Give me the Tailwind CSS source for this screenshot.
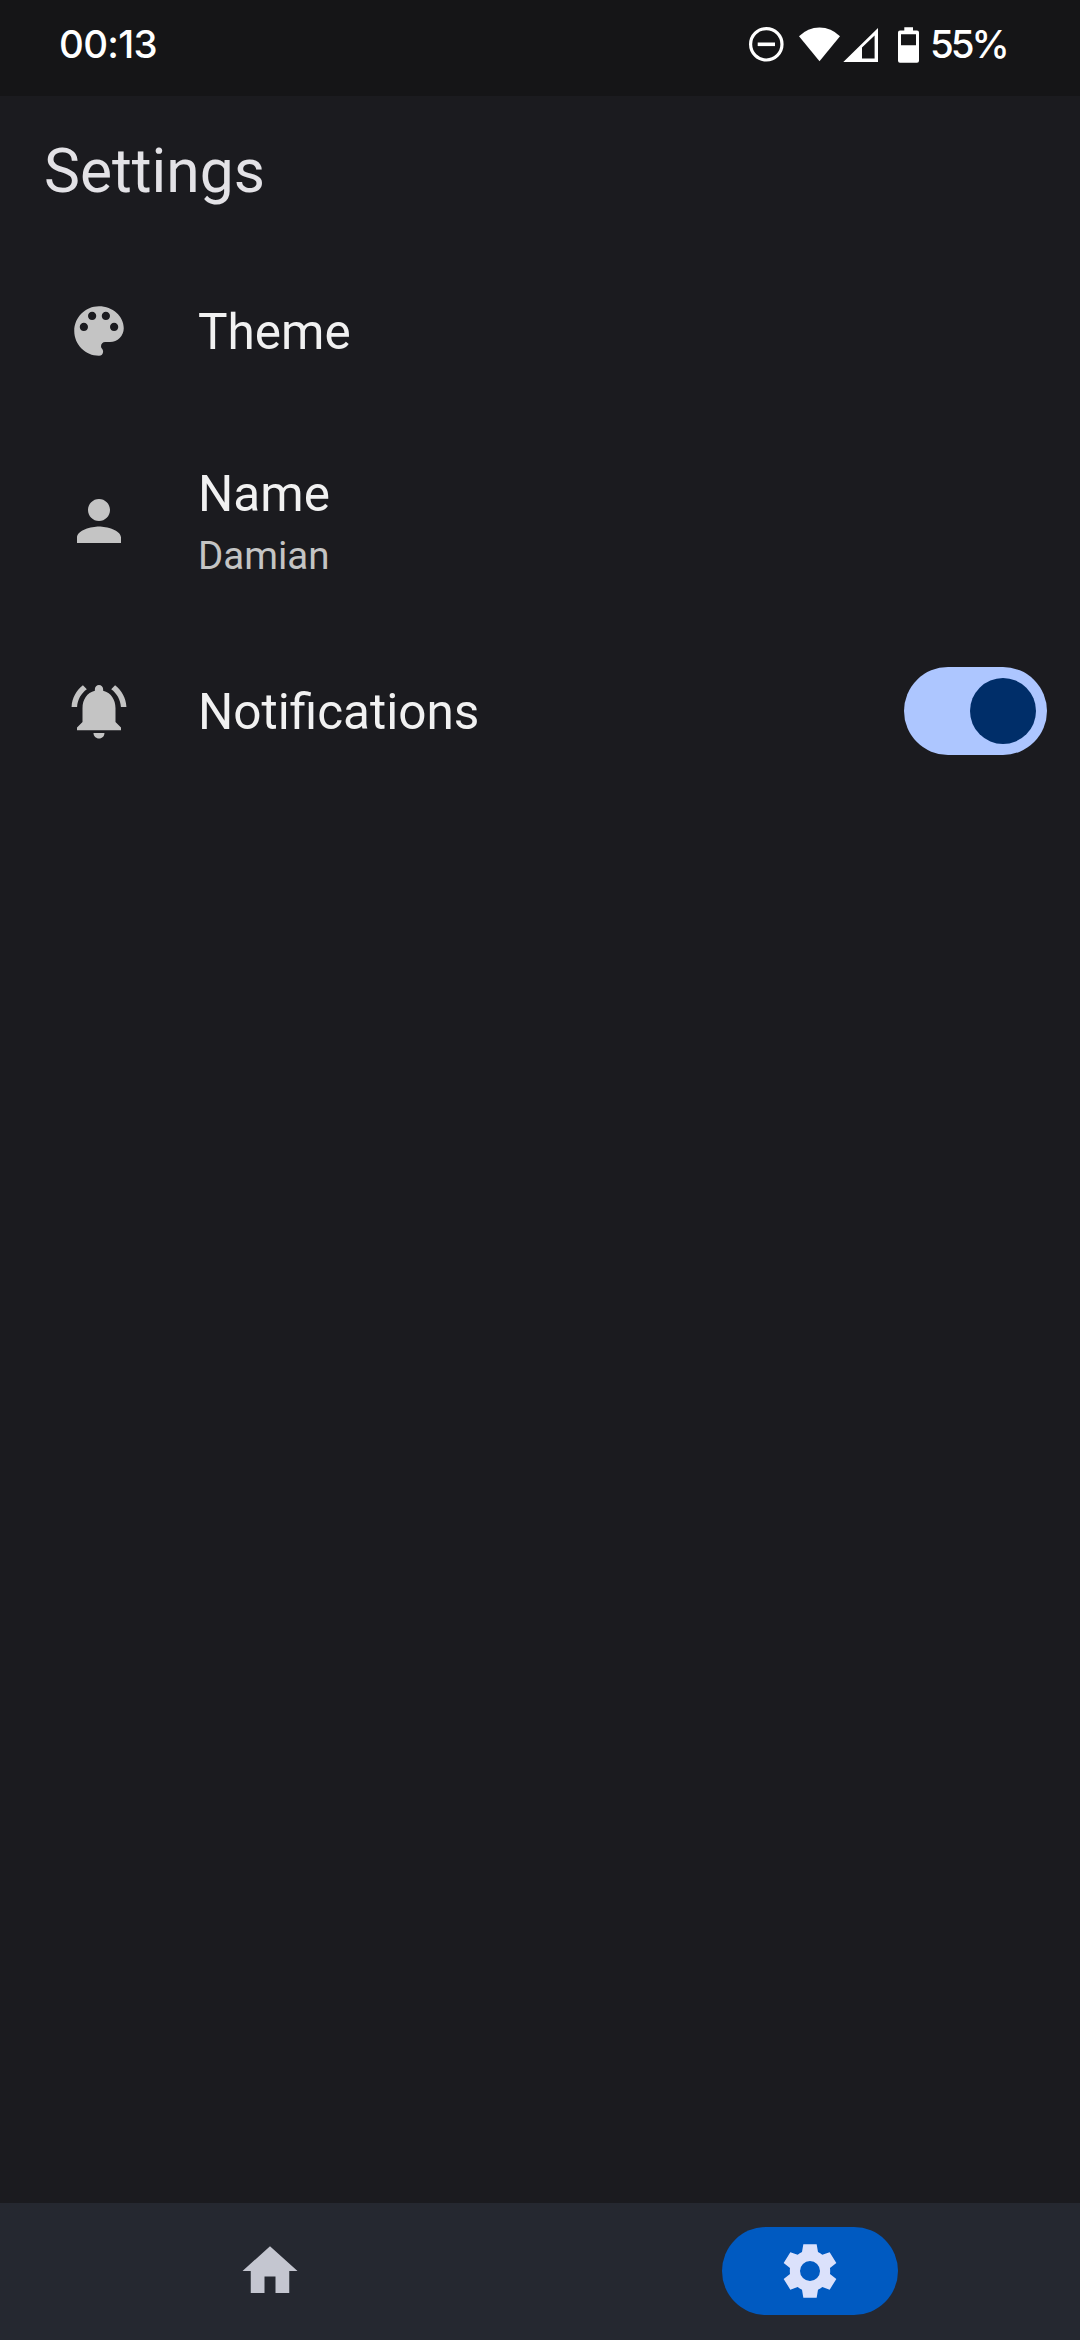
<!DOCTYPE html>
<html lang="en">
<head>
<meta charset="utf-8">
<title>Settings</title>
<script src="https://cdn.jsdelivr.net/npm/@tailwindcss/browser@4"></script>
</head>
<body class="flex h-[2340px] w-[1080px] flex-col overflow-hidden bg-[#1b1b1f] font-['Roboto',sans-serif]">
  <header class="flex h-24 shrink-0 items-start justify-between bg-[#151517] pl-[59px] pr-[75px] text-white">
    <span class="mt-5 font-['Inter',sans-serif] text-[38.5px] leading-[48px] font-[550] tracking-[-0.7px]">00:13</span>
    <div class="flex">
      <svg class="mt-[21px] h-12 w-[182px]" viewBox="0 0 182 48" fill="#fff">
        <circle cx="18.3" cy="23.3" r="15.7" fill="none" stroke="#fff" stroke-width="3.2"/>
        <path d="M9.700 21.500h17.300v3.600H9.700z"/>
        <path d="M71.500 40.300L51 15.200Q59.700 6.400 71.500 6.400T92 15.200Z"/>
        <path fill-rule="evenodd" d="M95.300 41L130 6.900V41ZM114 37.400h12.600V14.500L114 26.500Z"/>
        <path fill-rule="evenodd" d="M156.300 6.300h8.700V9.500h4q2 0 2 2V39.700q0 2-2 2H152q-2 0-2-2V11.500q0-2 2-2h4.300ZM153 13.200V24.300H168V13.200Z"/>
      </svg>
      <span class="mt-5 w-[75px] font-['Inter',sans-serif] text-[38.5px] leading-[48px] font-[550] tracking-[-3px]">55%</span>
    </div>
  </header>

  <main class="grow">
    <h1 class="h-[110px] pt-[39.5px] pl-11 text-[60.5px] leading-[72px] text-[#e3e2e6]">Settings</h1>
    <ul>
      <li class="mt-[60px] flex h-[130px] items-center pl-[66px]">
        <svg class="size-[66px]" viewBox="0 0 24 24" fill="#c4c4c4"><path d="M12 3c-4.970 0-9 4.030-9 9s4.030 9 9 9c.83 0 1.500-.67 1.500-1.500 0-.39-.15-.74-.39-1.010-.23-.26-.38-.61-.38-.99 0-.83.67-1.500 1.500-1.500H16c2.760 0 5-2.240 5-5 0-4.420-4.030-8-9-8zm-5.500 9c-.83 0-1.500-.67-1.500-1.500S5.670 9 6.500 9 8 9.670 8 10.500 7.330 12 6.500 12zm3-4C8.670 8 8 7.330 8 6.500S8.670 5 9.500 5s1.500.67 1.500 1.500S10.330 8 9.500 8zm5 0c-.83 0-1.500-.67-1.500-1.500S13.670 5 14.500 5s1.500.67 1.500 1.500S15.330 8 14.500 8zm3 4c-.83 0-1.500-.67-1.500-1.500S16.670 9 17.500 9s1.500.67 1.500 1.500-.67 1.500-1.500 1.500z"/></svg>
        <span class="pt-0.5 pl-[66px] text-[49.5px] leading-[58px] text-[#f1f1f1]">Theme</span>
      </li>
      <li class="flex h-[250px] items-center pl-[66px]">
        <svg class="size-[66px]" viewBox="0 0 24 24" fill="#c4c4c4"><path d="M12 12c2.210 0 4-1.790 4-4s-1.790-4-4-4-4 1.790-4 4 1.790 4 4 4zm0 2c-2.670 0-8 1.340-8 4v2h16v-2c0-2.660-5.330-4-8-4z"/></svg>
        <div class="flex flex-col pt-[1.5px] pl-[66px]">
          <span class="text-[49.5px] leading-[58px] text-[#f1f1f1]">Name</span>
          <span class="mt-[9.5px] text-[38.5px] leading-[46px] text-[#c4c4c4]">Damian</span>
        </div>
      </li>
      <li class="flex h-[130px] items-center pl-[66px]">
        <svg class="size-[66px]" viewBox="0 0 24 24" fill="#c4c4c4"><path d="M7.580 4.080L6.150 2.650C3.750 4.480 2.170 7.300 2.030 10.500h2c.15-2.650 1.510-4.970 3.550-6.420zm12.390 6.420h2c-.15-3.200-1.730-6.020-4.120-7.850l-1.420 1.430c2.020 1.450 3.390 3.770 3.540 6.420zM18 11c0-3.070-1.640-5.640-4.500-6.320V4c0-.83-.67-1.500-1.500-1.500s-1.500.67-1.500 1.500v.68C7.630 5.360 6 7.920 6 11v5l-2 2v1h16v-1l-2-2v-5zm-6 11c.14 0 .27-.01.4-.04.65-.14 1.180-.58 1.440-1.180.1-.24.15-.5.15-.78h-4c.01 1.100.9 2 2.010 2z"/></svg>
        <span class="grow pt-0.5 pl-[66px] text-[49.5px] leading-[58px] text-[#f1f1f1]">Notifications</span>
        <div class="mr-[33px] flex h-[88px] w-[143px] items-center justify-end rounded-full bg-[#adc6ff] pr-[11px]">
          <div class="size-[66px] rounded-full bg-[#002e69]"></div>
        </div>
      </li>
    </ul>
  </main>

  <nav class="grid h-[137px] shrink-0 grid-cols-2 items-start justify-items-center bg-[#252830] pt-6">
    <div class="flex h-[88px] w-44 items-center justify-center">
      <svg class="size-[66px]" viewBox="0 0 24 24" fill="#c4c6d0"><path d="M10 20v-6h4v6h5v-8h3L12 3 2 12h3v8z"/></svg>
    </div>
    <div class="flex h-[88px] w-44 items-center justify-center rounded-full bg-[#005ac1]">
      <svg class="size-[66px]" viewBox="0 0 198 198" fill="#dbe1fb"><path fill-rule="evenodd" d="M79 19h40l4 23q7 3 13 8l22-7 20 32-19 15q1 9 0 18l19 15-20 32-22-8q-6 5-13 8l-4 24H79l-4-24q-7-3-13-8l-22 8-20-32 19-15q-1-9 0-18L20 75l20-32 22 7q6-5 13-8ZM99 69a30 30 0 1 0 0 60 30 30 0 1 0 0-60Z"/></svg>
    </div>
  </nav>
</body>
</html>
